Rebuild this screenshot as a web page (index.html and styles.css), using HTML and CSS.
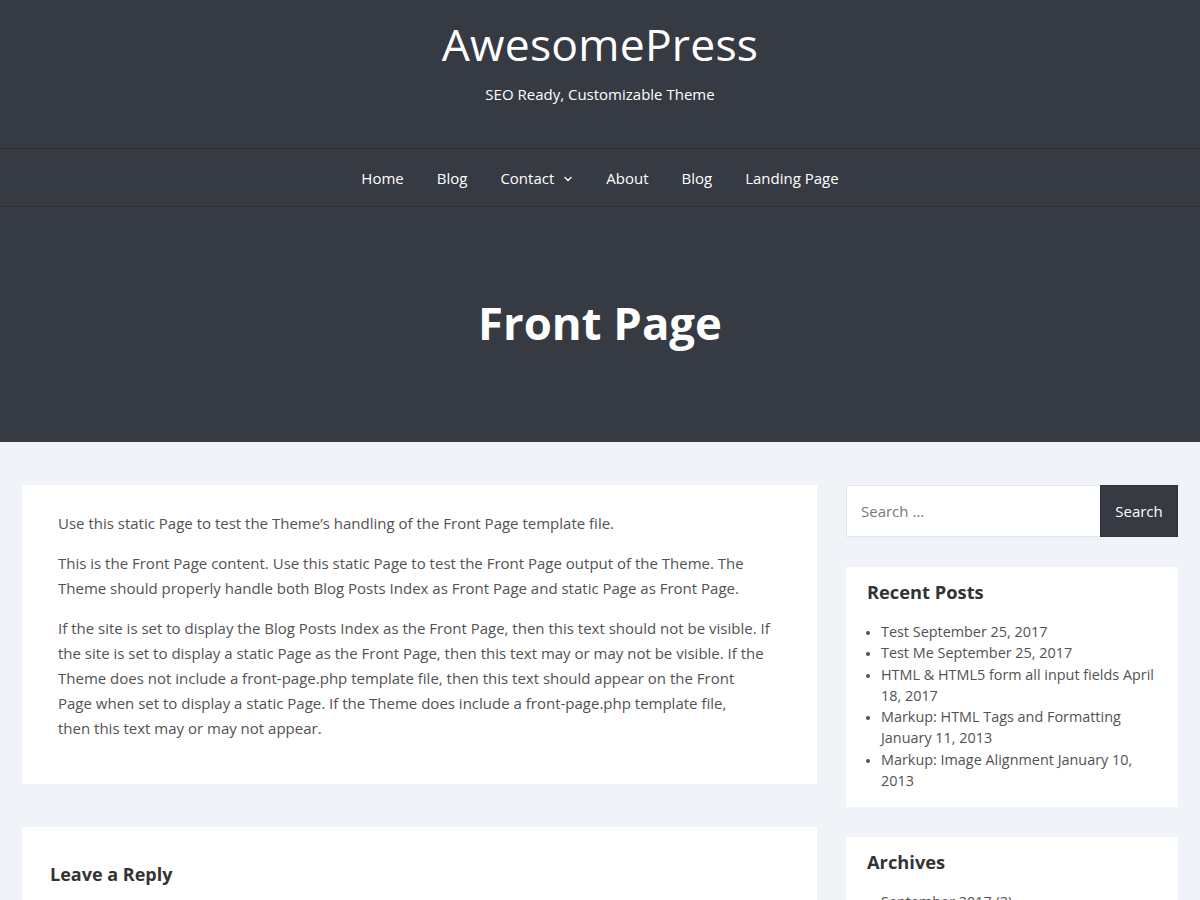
FILE: index.html
```html
<!DOCTYPE html>
<html lang="en">
<head>
<meta charset="utf-8">
<title>Front Page – AwesomePress</title>
<link rel="stylesheet" href="styles.css">
</head>
<body>
<header class="site-header">
  <div class="branding">
    <h1 class="site-title">AwesomePress</h1>
    <p class="site-description">SEO Ready, Customizable Theme</p>
  </div>
  <nav class="main-nav">
    <ul class="menu">
      <li><a href="#">Home</a></li>
      <li><a href="#">Blog</a></li>
      <li class="has-sub"><a href="#">Contact</a><svg class="chev" width="10" height="10" viewBox="0 0 10 10"><path d="M2 3.5 L5 6.5 L8 3.5" fill="none" stroke="#fff" stroke-width="1.4" stroke-linecap="round" stroke-linejoin="round"/></svg></li>
      <li><a href="#">About</a></li>
      <li><a href="#">Blog</a></li>
      <li><a href="#">Landing Page</a></li>
    </ul>
  </nav>
  <div class="hero">
    <h2 class="page-title">Front Page</h2>
  </div>
</header>

<div class="site-content">
  <main class="main-col">
    <article class="card entry">
      <p>Use this static Page to test the Theme’s handling of the Front Page template file.</p>
      <p>This is the Front Page content. Use this static Page to test the Front Page output of the Theme. The Theme should properly handle both Blog Posts Index as Front Page and static Page as Front Page.</p>
      <p>If the site is set to display the Blog Posts Index as the Front Page, then this text should not be visible. If the site is set to display a static Page as the Front Page, then this text may or may not be visible. If the Theme does not include a front-page.php template file, then this text should appear on the Front Page when set to display a static Page. If the Theme does include a front-page.php template file, then&nbsp;this text may or may not appear.</p>
    </article>
    <section class="card comments">
      <h3 class="reply-title">Leave a Reply</h3>
      <p class="comment-notes">Your email address will not be published. Required fields are marked <span class="req">*</span></p>
    </section>
  </main>

  <aside class="sidebar">
    <form class="search-form">
      <input class="search-field" type="search" placeholder="Search …">
      <button class="search-submit" type="button">Search</button>
    </form>
    <section class="widget">
      <h3 class="widget-title">Recent Posts</h3>
      <ul class="widget-list">
        <li><a href="#">Test</a> <span>September 25, 2017</span></li>
        <li><a href="#">Test Me</a> <span>September 25, 2017</span></li>
        <li><a href="#">HTML &amp; HTML5 form all input fields</a> <span>April 18, 2017</span></li>
        <li><a href="#">Markup: HTML Tags and Formatting</a> <span>January 11, 2013</span></li>
        <li><a href="#">Markup: Image Alignment</a> <span>January 10, 2013</span></li>
      </ul>
    </section>
    <section class="widget">
      <h3 class="widget-title">Archives</h3>
      <ul class="widget-list">
        <li><a href="#">September 2017</a>&nbsp;(2)</li>
        <li><a href="#">April 2017</a>&nbsp;(1)</li>
      </ul>
    </section>
  </aside>
</div>
</body>
</html>
```

FILE: styles.css
```css
* { box-sizing: border-box; }
html, body { margin: 0; padding: 0; }
body {
  font-family: "Open Sans", "DejaVu Sans", sans-serif;
  background: #f0f3f8;
  color: #525252;
  font-size: 15px;
}
a { color: inherit; text-decoration: none; }

.site-header { background: #363a43; color: #fff; }
.branding { height: 148px; text-align: center; padding-top: 14px; }
.site-title { margin: 0; font-weight: 400; font-size: 44.5px; line-height: 60px; letter-spacing: 0.2px; }
.site-description { margin: 9px 0 0; font-size: 15px; line-height: 22px; }

.main-nav { border-top: 1px solid #2d3031; border-bottom: 1px solid #2d3031; height: 59px; }
.menu { list-style: none; margin: 0; padding: 0; display: flex; justify-content: center; align-items: center; height: 57px; gap: 33px; }
.menu li { display: flex; align-items: center; font-size: 15px; font-weight: 500; }
.menu .chev { margin-left: 9px; margin-top: 2px; }

.hero { height: 235px; display: flex; align-items: center; justify-content: center; padding-bottom: 4px; }
.page-title { margin: 0; font-size: 45.5px; font-weight: 700; line-height: 1.2; }

.site-content { display: flex; gap: 29px; padding: 43px 22px 0; align-items: flex-start; }
.main-col { width: 795px; flex: none; display: flex; flex-direction: column; gap: 43px; }
.card { background: #fff; }
.entry { padding: 26px 46px 28px 36px; line-height: 25px; }
.entry p { margin: 0 0 15px; }
.comments { padding: 34px 28px 30px; height: 200px; }
.reply-title { margin: 0; font-size: 18px; font-weight: 700; color: #333; line-height: 26px; }
.comment-notes { margin: 10px 0 0; font-size: 13px; }
.req { color: #c0392b; }

.sidebar { width: 332px; flex: none; display: flex; flex-direction: column; gap: 30px; }
.search-form { display: flex; height: 52px; }
.search-field { flex: 1; min-width: 0; border: 1px solid #e2e5ea; border-right: 0; background: #fff; padding: 0 14px; font: inherit; font-size: 15px; color: #555; outline: none; }
.search-field::placeholder { color: #777; }
.search-submit { width: 78px; background: #363a43; color: #fff; border: 1px solid #2f333b; font: inherit; font-size: 15px; font-weight: 500; padding: 0; }
.widget { background: #fff; padding: 12px 21px 16px; }
.widget-title { margin: 0 0 16px; font-size: 18.3px; font-weight: 700; color: #333; line-height: 26px; }
.widget-list { margin: 0; padding-left: 14px; line-height: 21.3px; font-size: 14.4px; }
.widget-list li::marker { font-size: 12px; }
```
